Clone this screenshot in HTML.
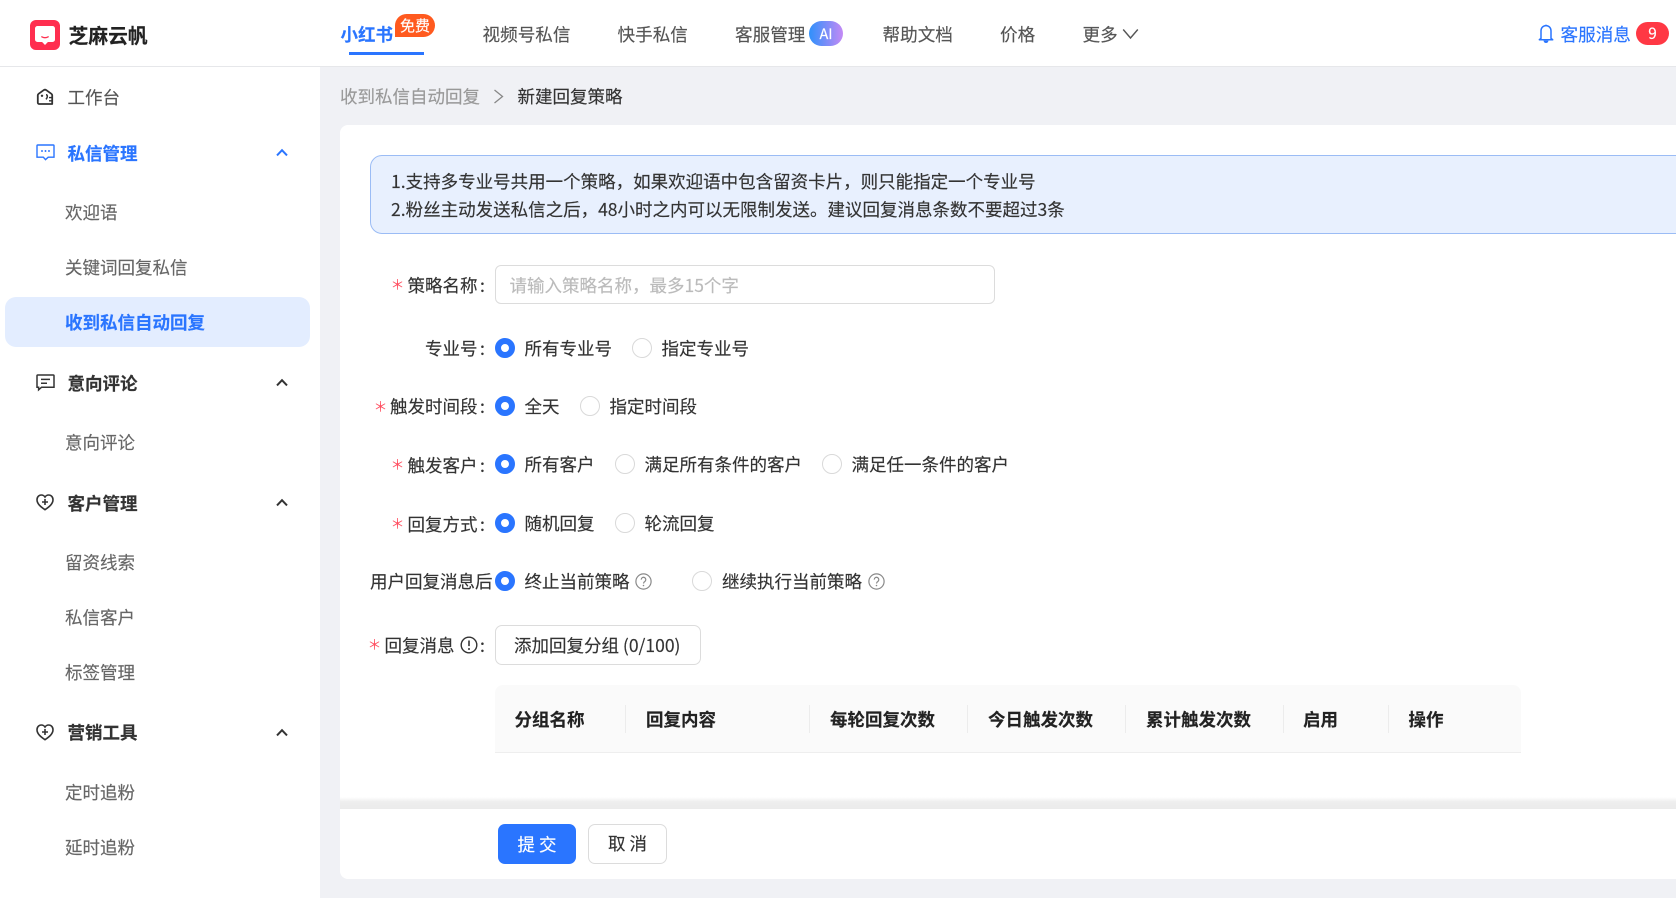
<!DOCTYPE html>
<html lang="zh"><head><meta charset="utf-8"><title>芝麻云帆</title>
<style>
html,body{margin:0;padding:0;width:1676px;height:898px;overflow:hidden;background:#f0f1f5}
body{position:relative;font-family:"Noto Sans CJK SC","Liberation Sans",sans-serif;font-size:17.5px;color:#333;-webkit-text-stroke:.15px currentColor}
.a{position:absolute;box-sizing:border-box}
.t{position:absolute;white-space:nowrap;line-height:24px;height:24px}
.nav{color:#555}
.sub{color:#666;left:65px}
.grp{left:67.5px;font-weight:700;color:#333}
.star{color:#ff4d5f;font-size:14px;-webkit-text-stroke:0}
.r{position:absolute;box-sizing:border-box;width:20px;height:20px;border-radius:50%}
.on{border:6px solid #2a75ff;background:#fff}
.off{border:1px solid #d9d9d9;background:#fff}
.th{font-weight:700;color:#222;top:708px}
.sep{position:absolute;top:705px;height:28px;width:1px;background:#ececec}
svg{position:absolute;overflow:visible}
</style></head><body>
<div class="a" style="left:0;top:0;width:1676px;height:67px;background:#fff;border-bottom:1px solid #e6e7ea"></div>
<div class="a" style="left:0;top:67px;width:320px;height:831px;background:#fff"></div>

<div class="a" style="left:30px;top:20px;width:30px;height:30px;border-radius:6px;background:#ff2e4f"></div>
<svg style="left:30px;top:20px" width="30" height="30" viewBox="0 0 30 30"><path d="M7.5 6h15a2.5 2.5 0 0 1 2.5 2.5v11a2.5 2.5 0 0 1-2.5 2.5h-4.6L15 25l-2.9-3H7.5A2.5 2.5 0 0 1 5 19.5V8.5A2.5 2.5 0 0 1 7.5 6z" fill="#fff"/><path d="M11.8 16.8q3.200 1.800 6.400 0" stroke="#ff2e4f" stroke-width="1.300" fill="none" stroke-linecap="round"/></svg>
<span class="t" style="left:68.5px;top:23px;font-size:19.8px;font-weight:700;color:#222">芝麻云帆</span>

<span class="t" style="left:340.5px;top:23px;font-weight:700;color:#2a75ff">小红书</span>
<div class="a" style="left:395px;top:14px;width:40px;height:23px;background:#ff5a1f;border-radius:12px 12px 12px 0;color:#fff;font-size:15px;line-height:24px;text-align:center">免费</div>
<div class="a" style="left:349px;top:52px;width:75px;height:3px;background:#2a75ff"></div>
<span class="t nav" style="left:482.5px;top:23px;font-size:17.6px">视频号私信</span>
<span class="t nav" style="left:617.5px;top:23px;font-size:17.6px">快手私信</span>
<span class="t nav" style="left:735px;top:23px;font-size:17.6px">客服管理</span>
<div class="a" style="left:809px;top:21px;width:34px;height:25px;border-radius:13px;background:linear-gradient(90deg,#2f90fb,#c48af5);color:#fff;font-size:14.5px;line-height:25px;text-align:center">AI</div>
<span class="t nav" style="left:882.5px;top:23px;font-size:17.6px">帮助文档</span>
<span class="t nav" style="left:1000px;top:23px;font-size:17.6px">价格</span>
<span class="t nav" style="left:1082.5px;top:23px;font-size:17.6px">更多</span>
<svg style="left:1122px;top:28px" width="17" height="12" viewBox="0 0 17 12"><path d="M1.2 1.5L8.5 10L15.8 1.5" fill="none" stroke="#555" stroke-width="1.400"/></svg>
<svg style="left:1538px;top:24px" width="16" height="20" viewBox="0 0 16 20"><path d="M8 1.6c-3 0-5 2.3-5 5.2v7.6l-1.7 1.3h13.4L13 14.4V6.8c0-2.900-2-5.200-5-5.200z" fill="none" stroke="#2a75ff" stroke-width="1.500" stroke-linejoin="round"/><path d="M8 .6v1.400M6.300 17.200a1.800 1.800 0 0 0 3.400 0z" stroke="#2a75ff" stroke-width="1.200" fill="#2a75ff"/></svg>
<span class="t" style="left:1560.5px;top:23px;color:#2a75ff;font-size:17.6px">客服消息</span>
<div class="a" style="left:1636px;top:22px;width:33px;height:23px;border-radius:12px;background:#ff3844;color:#fff;font-size:15.4px;line-height:22px;text-align:center">9</div>

<!-- sidebar -->
<svg style="left:36px;top:88px" width="18" height="18" viewBox="0 0 18 18"><path d="M1.8 7.2Q1.8 6.400 2.600 5.800L7.600 2.200Q9 1.200 10.400 2.200L15.400 5.800q.8.600.8 1.400V16H3.200a1.400 1.400 0 0 1-1.400-1.400z" fill="none" stroke="#333" stroke-width="1.800" stroke-linejoin="round"/><circle cx="6" cy="7.800" r="1.200" fill="#333"/><path d="M10 6.800c1.800 0 1.800 2.600 0 4.600" fill="none" stroke="#333" stroke-width="1.500"/><path d="M13 9.600h3M13 12.800h3" stroke="#333" stroke-width="1.400"/></svg>
<span class="t" style="left:67.5px;top:86px;color:#555">工作台</span>

<svg style="left:36px;top:144px" width="19" height="17" viewBox="0 0 19 17"><path d="M1.8 1h15.400a.8.8 0 0 1 .8.8v11.400h-5.800L9.500 15.600 7.300 13.200H1V1.800a.8.8 0 0 1 .8-.8z" fill="none" stroke="#2a75ff" stroke-width="1.400"/><circle cx="6" cy="7" r=".95" fill="#2a75ff"/><circle cx="9.500" cy="7" r=".95" fill="#2a75ff"/><circle cx="13" cy="7" r=".95" fill="#2a75ff"/></svg>
<span class="t" style="left:67.5px;top:142px;font-weight:700;color:#2a75ff">私信管理</span>
<svg style="left:276px;top:148px" width="12" height="9" viewBox="0 0 12 9"><path d="M1 7.400L6 2.200l5 5.200" fill="none" stroke="#2a75ff" stroke-width="2"/></svg>
<span class="t sub" style="top:201px">欢迎语</span>
<span class="t sub" style="top:256px">关键词回复私信</span>
<div class="a" style="left:5px;top:297px;width:305px;height:50px;border-radius:11px;background:#e3edff"></div>
<span class="t" style="left:65px;top:311px;font-weight:700;color:#2a75ff">收到私信自动回复</span>

<svg style="left:36px;top:374px" width="19" height="17" viewBox="0 0 19 17"><path d="M1.8 1h15.400a.8.8 0 0 1 .8.8v11.400H5.600L2.600 15.800v-2.600H1V1.800a.8.8 0 0 1 .8-.8z" fill="none" stroke="#333" stroke-width="1.500"/><path d="M5 5.400h9M5 9.200h6" stroke="#333" stroke-width="1.500"/></svg>
<span class="t grp" style="top:371.5px">意向评论</span>
<svg style="left:276px;top:378px" width="12" height="9" viewBox="0 0 12 9"><path d="M1 7.400L6 2.200l5 5.200" fill="none" stroke="#333" stroke-width="2"/></svg>
<span class="t sub" style="top:431px">意向评论</span>

<svg style="left:36px;top:494px" width="18" height="17" viewBox="0 0 18 17"><path d="M9 15.700C5 13 1 10 1 5.800 1 3 3 1 5.300 1 7 1 8.200 1.800 9 3c.8-1.200 2-2 3.700-2C15 1 17 3 17 5.800c0 4.200-4 7.200-8 9.900z" fill="none" stroke="#333" stroke-width="1.600"/><path d="M9 5v6M6 8h6" stroke="#333" stroke-width="1.600"/></svg>
<span class="t grp" style="top:491.5px">客户管理</span>
<svg style="left:276px;top:498px" width="12" height="9" viewBox="0 0 12 9"><path d="M1 7.400L6 2.200l5 5.200" fill="none" stroke="#333" stroke-width="2"/></svg>
<span class="t sub" style="top:551px">留资线索</span>
<span class="t sub" style="top:606px">私信客户</span>
<span class="t sub" style="top:661px">标签管理</span>

<svg style="left:36px;top:724px" width="18" height="17" viewBox="0 0 18 17"><path d="M9 15.700C5 13 1 10 1 5.800 1 3 3 1 5.300 1 7 1 8.200 1.800 9 3c.8-1.200 2-2 3.700-2C15 1 17 3 17 5.800c0 4.200-4 7.200-8 9.900z" fill="none" stroke="#333" stroke-width="1.600"/><path d="M9 5v6M6 8h6" stroke="#333" stroke-width="1.600"/></svg>
<span class="t grp" style="top:721px">营销工具</span>
<svg style="left:276px;top:728px" width="12" height="9" viewBox="0 0 12 9"><path d="M1 7.400L6 2.200l5 5.200" fill="none" stroke="#333" stroke-width="2"/></svg>
<span class="t sub" style="top:781px">定时追粉</span>
<span class="t sub" style="top:836px">延时追粉</span>

<!-- breadcrumb -->
<span class="t" style="left:340px;top:84.5px;color:#999">收到私信自动回复</span>
<svg style="left:493px;top:89px" width="11" height="15" viewBox="0 0 11 15"><path d="M1.5 1L9.5 7.5L1.5 14" fill="none" stroke="#888" stroke-width="1.300"/></svg>
<span class="t" style="left:517.5px;top:84.5px;color:#333">新建回复策略</span>

<!-- card -->
<div class="a" style="left:340px;top:125px;width:1400px;height:753.5px;background:#fff;border-radius:8px"></div>
<div class="a" style="left:370px;top:155px;width:1400px;height:79px;background:#e8f0fe;border:1px solid #9bbcf5;border-radius:12px"></div>
<span class="t" style="left:391px;top:169.5px;color:#333">1.支持多专业号共用一个策略，如果欢迎语中包含留资卡片，则只能指定一个专业号</span>
<span class="t" style="left:391px;top:198px;color:#333">2.粉丝主动发送私信之后，48小时之内可以无限制发送。建议回复消息条数不要超过3条</span>

<!-- row 1 -->
<span class="t star" style="left:390.5px;top:272.5px">＊</span>
<span class="t" style="left:407.5px;top:274px">策略名称</span><span class="t" style="left:480px;top:274px">:</span>
<div class="a" style="left:495px;top:265px;width:500px;height:39px;border:1px solid #dcdcdc;border-radius:6px;background:#fff"></div>
<span class="t" style="left:509.5px;top:274px;color:#bbb">请输入策略名称，最多15个字</span>

<!-- row 2 -->
<span class="t" style="left:425px;top:337px">专业号</span><span class="t" style="left:480px;top:337px">:</span>
<div class="r on" style="left:495px;top:338px"></div>
<span class="t" style="left:524.5px;top:337px">所有专业号</span>
<div class="r off" style="left:632px;top:338px"></div>
<span class="t" style="left:661.5px;top:337px">指定专业号</span>

<!-- row 3 -->
<span class="t star" style="left:373.5px;top:394.5px">＊</span>
<span class="t" style="left:390px;top:395px">触发时间段</span><span class="t" style="left:480px;top:395px">:</span>
<div class="r on" style="left:495px;top:396px"></div>
<span class="t" style="left:524.5px;top:394.5px">全天</span>
<div class="r off" style="left:580px;top:396px"></div>
<span class="t" style="left:609.5px;top:394.5px">指定时间段</span>

<!-- row 4 -->
<span class="t star" style="left:390.5px;top:452.5px">＊</span>
<span class="t" style="left:407.5px;top:454px">触发客户</span><span class="t" style="left:480px;top:454px">:</span>
<div class="r on" style="left:495px;top:454px"></div>
<span class="t" style="left:524.5px;top:452.5px">所有客户</span>
<div class="r off" style="left:615px;top:454px"></div>
<span class="t" style="left:644.5px;top:452.5px">满足所有条件的客户</span>
<div class="r off" style="left:822px;top:454px"></div>
<span class="t" style="left:851.5px;top:452.5px">满足任一条件的客户</span>

<!-- row 5 -->
<span class="t star" style="left:390.5px;top:511.5px">＊</span>
<span class="t" style="left:407.5px;top:512.5px">回复方式</span><span class="t" style="left:480px;top:512.5px">:</span>
<div class="r on" style="left:495px;top:513px"></div>
<span class="t" style="left:524.5px;top:511.5px">随机回复</span>
<div class="r off" style="left:615px;top:513px"></div>
<span class="t" style="left:644.5px;top:511.5px">轮流回复</span>

<!-- row 6 -->
<span class="t" style="left:370px;top:569.5px">用户回复消息后</span>
<div class="r on" style="left:495px;top:571px"></div>
<span class="t" style="left:524.5px;top:569.5px">终止当前策略</span>
<svg style="left:635px;top:573px" width="17" height="17" viewBox="0 0 17 17"><circle cx="8.5" cy="8.5" r="7.6" fill="none" stroke="#888" stroke-width="1.200"/><path d="M6.2 6.6a2.3 2.3 0 1 1 3.6 1.900c-.8.5-1.300 1-1.300 2" fill="none" stroke="#888" stroke-width="1.200"/><circle cx="8.5" cy="12.5" r=".8" fill="#888"/></svg>
<div class="r off" style="left:692px;top:571px"></div>
<span class="t" style="left:722px;top:569.5px">继续执行当前策略</span>
<svg style="left:867.5px;top:573px" width="17" height="17" viewBox="0 0 17 17"><circle cx="8.5" cy="8.5" r="7.6" fill="none" stroke="#888" stroke-width="1.200"/><path d="M6.2 6.6a2.3 2.3 0 1 1 3.6 1.900c-.8.5-1.300 1-1.300 2" fill="none" stroke="#888" stroke-width="1.200"/><circle cx="8.5" cy="12.5" r=".8" fill="#888"/></svg>

<!-- row 7 -->
<span class="t star" style="left:367.5px;top:632.5px">＊</span>
<span class="t" style="left:384.5px;top:633.5px">回复消息</span>
<svg style="left:460px;top:636px" width="18" height="18" viewBox="0 0 18 18"><circle cx="9" cy="9" r="7.8" fill="none" stroke="#333" stroke-width="1.400"/><path d="M9 4.500v5.600" stroke="#333" stroke-width="1.600"/><circle cx="9" cy="13" r="1" fill="#333"/></svg>
<span class="t" style="left:480px;top:633.5px">:</span>
<div class="a" style="left:495px;top:625px;width:206px;height:40px;border:1px solid #dcdcdc;border-radius:7px;background:#fff"></div>
<span class="t" style="left:514px;top:633.5px">添加回复分组 (0/100)</span>

<!-- table -->
<div class="a" style="left:495px;top:685px;width:1026px;height:68px;background:#fafafa;border-bottom:1px solid #eee;border-radius:8px 8px 0 0"></div>
<span class="t th" style="left:514.5px">分组名称</span><div class="sep" style="left:625px"></div>
<span class="t th" style="left:646px">回复内容</span><div class="sep" style="left:809px"></div>
<span class="t th" style="left:830px">每轮回复次数</span><div class="sep" style="left:967px"></div>
<span class="t th" style="left:988px">今日触发次数</span><div class="sep" style="left:1125px"></div>
<span class="t th" style="left:1146px">累计触发次数</span><div class="sep" style="left:1282.5px"></div>
<span class="t th" style="left:1303px">启用</span><div class="sep" style="left:1387.5px"></div>
<span class="t th" style="left:1408.5px">操作</span>

<!-- footer -->
<div class="a" style="left:340px;top:797px;width:1336px;height:12px;background:linear-gradient(180deg,#fff 0%,#eee 40%,#ebebeb 100%)"></div>
<div class="a" style="left:498px;top:824px;width:78px;height:40px;border-radius:7px;background:#2a75ff;color:#fff;text-align:center;line-height:41px">提 交</div>
<div class="a" style="left:588px;top:824px;width:79px;height:40px;border-radius:7px;background:#fff;border:1px solid #dcdcdc;color:#333;text-align:center;line-height:38px">取 消</div>
</body></html>
